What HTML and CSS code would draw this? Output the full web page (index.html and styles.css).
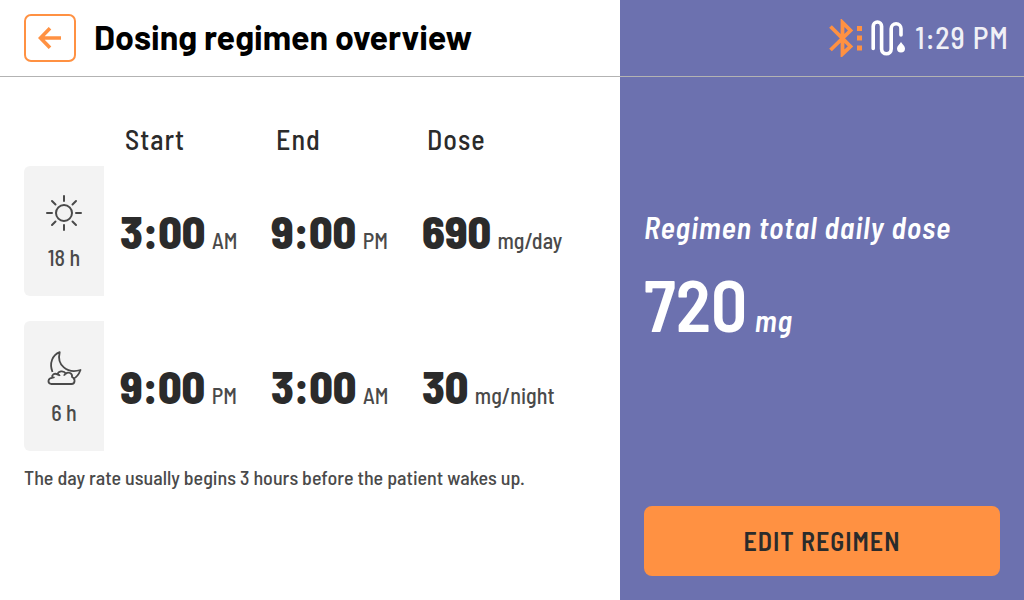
FILE: index.html
```html
<!DOCTYPE html>
<html lang="en">
<head>
<meta charset="utf-8">
<meta name="viewport" content="width=device-width, initial-scale=1">
<title>Dosing regimen overview</title>
<link rel="stylesheet" href="styles.css">
</head>
<body>
<div class="screen">
  <header class="title-bar">
    <button class="back" type="button" aria-label="Back">
      <svg width="24" height="22" viewBox="0 0 24 22" fill="none" stroke="currentColor" stroke-width="3.6"><path d="M23 11H3M12 1.2 2.5 11 12 20.8"/></svg>
    </button>
    <h1 class="title">Dosing regimen overview</h1>
  </header>
  <div class="status-bar">
    <svg class="bluetooth" width="34" height="38" viewBox="0 0 34 38" aria-hidden="true"><path d="M1.500 7.500 21.500 27.500 13.500 35V3.500L21.500 11.500 1.500 31" fill="none" stroke="currentColor" stroke-width="3.8"/><path d="M28 7h5v5h-5zM28 16.500h5v5h-5zM28 26.500h5v5h-5z" fill="currentColor"/></svg>
    <svg class="tube" width="36" height="38" viewBox="0 0 36 38" aria-hidden="true"><path d="M2.200 29.500V7.200a4.200 4.200 0 0 1 8.400 0V30a4.800 4.800 0 0 0 9.600 0V9.700a4.900 4.900 0 0 1 9.800 0V16" fill="none" stroke="currentColor" stroke-width="3.600" stroke-linecap="round"/><path d="M30 23c1.500 2.500 4 4 4 6.500a4 4 0 0 1-8 0C26 27 28.500 25.500 30 23z" fill="currentColor"/></svg>
    <time class="clock">1:29 PM</time>
  </div>
  <main class="overview">
    <table class="regimen">
      <thead>
        <tr><td class="corner"></td><th class="column" scope="col">Start</th><th class="column" scope="col">End</th><th class="column" scope="col">Dose</th></tr>
      </thead>
      <tbody>
        <tr>
          <th class="period" scope="row">
            <svg class="period-icon" width="40" height="40" viewBox="0 0 40 40" fill="none" stroke="currentColor" stroke-width="2" stroke-linecap="round" aria-hidden="true"><circle cx="20" cy="20" r="8"/><path d="M20 3v5M20 32v5M3 20h5M32 20h5M8 8l3.500 3.500M28.500 28.500 32 32M8 32l3.500-3.500M28.500 11.500 32 8"/></svg>
            <span class="hours">18 h</span>
          </th>
          <td class="value"><b class="number">3:00</b> AM</td>
          <td class="value"><b class="number">9:00</b> PM</td>
          <td class="value"><b class="number">690</b> mg/day</td>
        </tr>
      </tbody>
      <tbody>
        <tr><td class="gap" colspan="4"></td></tr>
        <tr>
          <th class="period" scope="row">
            <svg class="period-icon" width="40" height="40" viewBox="0 0 40 40" fill="none" stroke="currentColor" stroke-width="1.800" stroke-linejoin="round" aria-hidden="true"><path d="M8.500 24C5 15 8.500 7 15.700 4.200 12.500 17 23 26 36.500 22c-1.500 4-4 7.500-7.500 9"/><path d="M7 36h20.500c4 0 4-6 .500-7 .800-4-4-5.500-6-3.500-2.500-3.500-8-2.500-8.500 1-3-2-6 .500-5.300 3.300C4 30 3 35 7 36zM8.200 29.800c.8-.5 1.600-.5 2.300 0M13.500 26.500c1.200 0 2 .6 2.300 1.500M22 25.500c-1.200.5-1.800 1.200-1.800 2.300"/></svg>
            <span class="hours">6 h</span>
          </th>
          <td class="value"><b class="number">9:00</b> PM</td>
          <td class="value"><b class="number">3:00</b> AM</td>
          <td class="value"><b class="number">30</b> mg/night</td>
        </tr>
      </tbody>
    </table>
    <p class="note">The day rate usually begins 3 hours before the patient wakes up.</p>
  </main>
  <aside class="summary">
    <h2 class="summary-title">Regimen total daily dose</h2>
    <p class="total"><strong class="total-number">720</strong> <em class="total-unit">mg</em></p>
    <button class="edit" type="button">EDIT REGIMEN</button>
  </aside>
</div>
</body>
</html>
```
FILE: styles.css
```css
* { box-sizing: border-box; }
body {
  margin: 0;
  background: #fff;
  color: #2b2b2b;
  font-family: "Barlow Semi Condensed", Roboto, sans-serif;
}
h1, h2, p { margin: 0; }
button { font-family: inherit; cursor: pointer; }
.screen {
  display: grid;
  grid-template-columns: minmax(0, 1fr) 404px;
  grid-template-rows: auto 1fr;
  min-height: 100vh;
}
.title-bar, .status-bar {
  display: flex;
  align-items: center;
  height: 77px;
  border-bottom: 1px solid #b3b3b3;
}
.title-bar { gap: 18px; padding: 0 24px; }
.back {
  display: flex;
  align-items: center;
  justify-content: center;
  width: 52px;
  height: 48px;
  padding: 0;
  border: 2px solid #ff9142;
  border-radius: 7px;
  background: #fff;
  color: #ff9142;
}
.title {
  padding-bottom: 2px;
  color: #000;
  font-family: Barlow, Roboto, sans-serif;
  font-size: 34px;
  font-weight: 700;
  line-height: 40px;
  white-space: nowrap;
}
.status-bar {
  justify-content: flex-end;
  gap: 8px;
  padding: 0 15px;
  background: #6c71af;
  color: #f0f0f6;
}
.bluetooth { color: #ff9142; }
.tube { color: #fff; }
.clock {
  padding-bottom: 2px;
  font-size: 30px;
  font-weight: 500;
  line-height: 40px;
  letter-spacing: 1px;
  white-space: nowrap;
}
.overview { padding: 37px 24px 24px; }
.regimen { width: 100%; border-collapse: collapse; table-layout: fixed; }
.corner { width: 80px; padding: 0; }
.column {
  width: 151px;
  height: 52px;
  padding: 0 0 2px 21px;
  font-size: 28px;
  font-weight: 500;
  line-height: 50px;
  letter-spacing: 1px;
  text-align: left;
}
.column:last-child { width: auto; }
.gap { height: 25px; padding: 0; }
.period {
  height: 130px;
  padding: 27px 0 0;
  border-radius: 6px 0 0 6px;
  background: #f3f3f3;
  color: #4a4a4a;
  font-weight: 500;
  text-align: center;
  vertical-align: top;
}
.period-icon { display: block; margin: 0 auto 10px; }
.hours { display: block; font-size: 22px; line-height: 28px; }
.value {
  padding: 8px 0 0 16px;
  color: #4a4a4a;
  font-size: 22px;
  font-weight: 500;
  line-height: 56px;
  white-space: nowrap;
}
.number { margin-right: 2px; color: #2b2b2b; font-size: 46px; font-weight: 800; }
.note { margin-top: 12px; color: #4a4a4a; font-size: 20px; font-weight: 500; line-height: 28px; }
.summary {
  display: flex;
  flex-direction: column;
  padding: 130px 24px 24px;
  background: #6c71af;
  color: #fff;
}
.summary-title { font-size: 30px; font-style: italic; font-weight: 600; line-height: 40px; letter-spacing: 1px; white-space: nowrap; }
.total { margin-top: 14px; line-height: 84px; }
.total-number { margin-right: 4px; font-size: 72px; font-weight: 600; }
.total-unit { font-size: 30px; font-weight: 600; letter-spacing: 1px; }
.edit {
  height: 70px;
  margin-top: auto;
  padding: 0 0 2px;
  border: 0;
  border-radius: 8px;
  background: #ff9142;
  color: #2b2b2b;
  font-size: 26px;
  font-weight: 600;
  letter-spacing: 1px;
}
```
